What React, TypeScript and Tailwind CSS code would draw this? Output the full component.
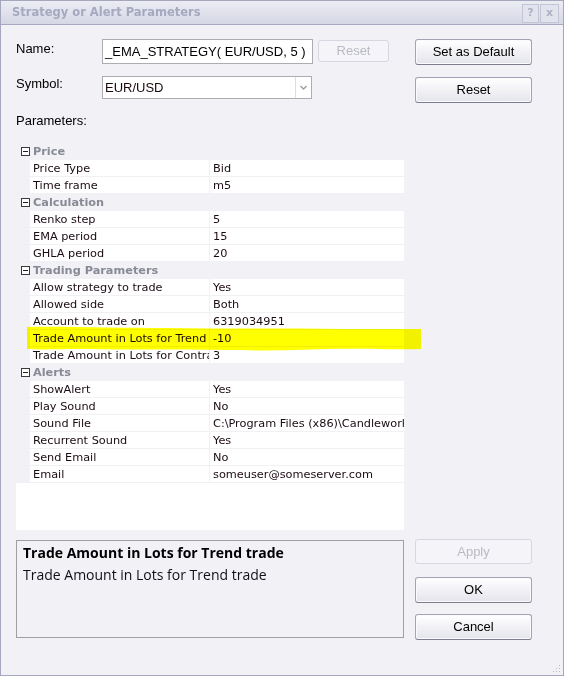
import type { ReactNode } from 'react';

type Row = { cat: string } | { name: string; value: string };

const rows: Row[] = [
  { cat: 'Price' },
  { name: 'Price Type', value: 'Bid' },
  { name: 'Time frame', value: 'm5' },
  { cat: 'Calculation' },
  { name: 'Renko step', value: '5' },
  { name: 'EMA period', value: '15' },
  { name: 'GHLA period', value: '20' },
  { cat: 'Trading Parameters' },
  { name: 'Allow strategy to trade', value: 'Yes' },
  { name: 'Allowed side', value: 'Both' },
  { name: 'Account to trade on', value: '6319034951' },
  { name: 'Trade Amount in Lots for Trend trade', value: '-10' },
  { name: 'Trade Amount in Lots for Contra trade', value: '3' },
  { cat: 'Alerts' },
  { name: 'ShowAlert', value: 'Yes' },
  { name: 'Play Sound', value: 'No' },
  { name: 'Sound File', value: 'C:\\Program Files (x86)\\Candleworks\\Sounds\\alert.wav' },
  { name: 'Recurrent Sound', value: 'Yes' },
  { name: 'Send Email', value: 'No' },
  { name: 'Email', value: 'someuser@someserver.com' },
];

function Btn({ children, disabled, className }: { children: ReactNode; disabled?: boolean; className?: string }) {
  return (
    <div
      className={
        'flex items-center justify-center rounded-[3px] border text-[13px] ' +
        (disabled
          ? 'border-[#d6d7e0] bg-[#f5f5f9] text-[#b9bac4] '
          : 'border-[#a3a4b3] border-b-[#7c7d8e] bg-gradient-to-b from-white to-[#e4e4ec] text-black shadow-[inset_0_0_0_1px_#fbfbfd] ') +
        (className || '')
      }
    >
      {children}
    </div>
  );
}

export default function App() {
  return (
    <div className="relative w-[564px] h-[676px] overflow-hidden border border-[#a4a7bd] bg-[#f1f1f6] font-['Liberation_Sans',Arial,sans-serif] flex flex-col">
      {/* title bar */}
      <div className="h-[24px] flex items-center border-b border-[#a6a9c0] bg-gradient-to-b from-[#ececf3] to-[#d5d7e5] pl-[11px] pr-[4px]">
        <span className="font-['DejaVu_Sans',Verdana,sans-serif] font-bold text-[11.5px] text-[#a5a9bf]">
          Strategy or Alert Parameters
        </span>
        <div className="ml-auto flex gap-[1px] mt-[1px]">
          <div className="w-[17px] h-[19px] border border-[#c3c5d6] bg-[#e2e3ed] flex items-center justify-center font-['DejaVu_Sans',sans-serif] font-bold text-[11px] text-[#aeb1c4]">?</div>
          <div className="w-[19px] h-[19px] border border-[#c3c5d6] bg-[#e2e3ed] flex items-center justify-center font-['DejaVu_Sans',sans-serif] font-bold text-[11px] text-[#aeb1c4]">x</div>
        </div>
      </div>

      {/* client */}
      <div className="flex pl-[15px] pt-[14px]">
        <div className="w-[388px] flex flex-col">
          <div className="flex items-start h-[25px]">
            <div className="w-[86px] mt-[2px] text-[13px] leading-[16px] text-black">Name:</div>
            <div className="w-[211px] h-[25px] border border-[#abadb3] bg-white flex items-center pl-[2px] overflow-hidden whitespace-nowrap text-[13px] leading-[16px] text-black">
              _EMA_STRATEGY( EUR/USD, 5 )
            </div>
            <Btn disabled className="ml-[5px] mt-[1px] w-[71px] h-[22px]">Reset</Btn>
          </div>
          <div className="flex items-start h-[23px] mt-[12px]">
            <div className="w-[86px] text-[13px] leading-[16px] text-black">Symbol:</div>
            <div className="w-[210px] h-[23px] border border-[#abadb3] bg-white flex items-center">
              <div className="flex-1 pl-[2px] text-[13px] leading-[16px] text-[#1a0a0a]">EUR/USD</div>
              <div className="w-[16px] h-full border-l border-[#dcdde3] flex items-center justify-center">
                <svg width="7" height="5" viewBox="0 0 7 5">
                  <path d="M0.5 1 L3.5 4 L6.5 1" fill="none" stroke="#9a9cab" strokeWidth="1.4" />
                </svg>
              </div>
            </div>
          </div>
          <div className="mt-[14px] text-[13px] leading-[16px] text-black">Parameters:</div>

          {/* property grid */}
          <div className="mt-[14px] h-[387px] bg-white overflow-hidden font-['DejaVu_Sans',Verdana,sans-serif] text-[11.3px] leading-[16px]">
            {rows.map((r, i) =>
              'cat' in r ? (
                <div key={i} className="h-[17px] border-b border-[#f1f1f6] bg-[#f1f1f6] flex items-center">
                  <div className="w-[17px] flex justify-center pl-[1px]">
                    <div className="w-[9px] h-[9px] border border-[#3a3a3a] bg-white flex items-center justify-center">
                      <div className="w-[5px] h-[1px] bg-[#222]" />
                    </div>
                  </div>
                  <span className="pt-[1px] font-bold text-[#888b95]">{r.cat}</span>
                </div>
              ) : (
                <div key={i} className="h-[17px] border-b border-[#f0f0f5] flex">
                  <div className="w-[14px] bg-[#f1f1f6]" />
                  <div className="w-[180px] pl-[3px] pt-[1px] border-r border-[#f0f0f5] overflow-hidden whitespace-nowrap text-[#1b0b14]">{r.name}</div>
                  <div className="flex-1 pl-[3px] pt-[1px] overflow-hidden whitespace-nowrap text-[#1b0b14]">{r.value}</div>
                </div>
              )
            )}
          </div>

          {/* description */}
          <div className="mt-[10px] h-[98px] border border-[#a0a0a4] pl-[6px] pt-[1px] font-['Open_Sans',sans-serif] text-[14px] leading-[22px] text-[#101018]">
            <div className="font-bold text-black">Trade Amount in Lots for Trend trade</div>
            <div>Trade Amount in Lots for Trend trade</div>
          </div>
        </div>

        <div className="ml-[11px] w-[117px] flex flex-col">
          <Btn className="h-[26px]">Set as Default</Btn>
          <Btn className="h-[26px] mt-[12px]">Reset</Btn>
          <Btn disabled className="h-[25px] mt-[436px]">Apply</Btn>
          <Btn className="h-[26px] mt-[13px]">OK</Btn>
          <Btn className="h-[26px] mt-[11px]">Cancel</Btn>
        </div>
      </div>

      {/* highlighter stroke over the selected row */}
      <svg className="absolute left-[25px] top-[325px] mix-blend-multiply pointer-events-none" width="396" height="26" viewBox="0 0 396 26">
        <path
          d="M1 1 C40 0 90 2 140 2 C200 3 260 2 320 3 C350 3 375 3 395 3 L395 23 C370 24 340 22 300 23 C270 24 240 25 200 24 C150 23 100 24 60 23 C35 23 15 24 1 23 Z"
          fill="#ffff00"
        />
      </svg>

      {/* resize grip */}
      <svg className="absolute right-[2px] bottom-[2px]" width="8" height="8" viewBox="0 0 8 8">
        <rect x="6" y="0" width="1" height="1" fill="#b8bac8" />
        <rect x="3" y="3" width="1" height="1" fill="#b8bac8" />
        <rect x="6" y="3" width="1" height="1" fill="#b8bac8" />
        <rect x="0" y="6" width="1" height="1" fill="#b8bac8" />
        <rect x="3" y="6" width="1" height="1" fill="#b8bac8" />
        <rect x="6" y="6" width="1" height="1" fill="#b8bac8" />
      </svg>
    </div>
  );
}
